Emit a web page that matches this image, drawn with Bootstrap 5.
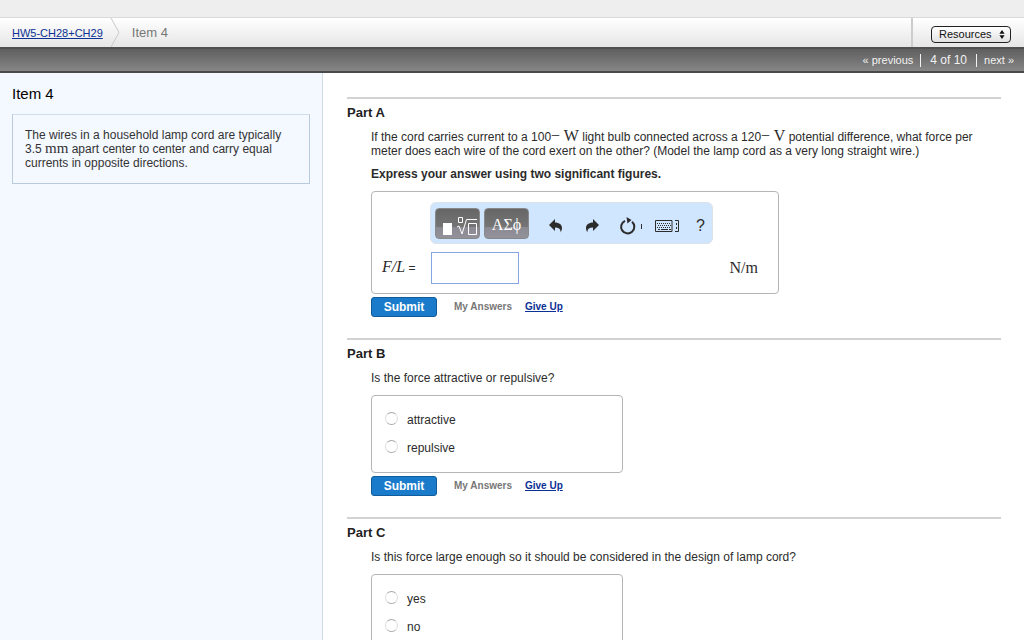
<!DOCTYPE html>
<html lang="en">
<head>
<meta charset="utf-8">
<meta name="viewport" content="width=device-width, initial-scale=1">
<title>HW5-CH28+CH29 - Item 4</title>
<link href="https://cdn.jsdelivr.net/npm/bootstrap@5.3.0/dist/css/bootstrap.min.css" rel="stylesheet">
<style>
  body { font-family: "Liberation Sans", Arial, sans-serif; font-size: 12px; line-height: 14px; color: #2b2b2b; }
  a { color: #0b3194; }
  .top-strip { height: 18px; background: #eee; border-bottom: 1px solid #d9d9d9; }
  .crumb-bar { height: 29px; background: linear-gradient(#fff, #e6e6e6); }
  .crumb-bar .crumb-link { font-size: 11px; padding-left: 12px; }
  .crumb-sep { width: 10px; height: 29px; margin: 0 12px 0 7px; }
  .crumb-now { font-size: 13px; color: #777; }
  .resources-cell { border-left: 2px solid #ccc; padding: 4px 13px 0 18px; }
  .resources-pick { appearance: none; width: 80px; height: 17px; font-size: 11px; line-height: 13px; padding: 0 7px; border: 1px solid #222; border-radius: 4px; background: linear-gradient(#fff, #e2e2e2); color: #111; }
  .pick-arrows { right: 6px; top: 4px; pointer-events: none; }
  .pager-bar { height: 26px; padding-right: 10px; font-size: 11px; color: #f2f2f2; background: linear-gradient(#5f5f5f, #868686); border-top: 2px solid #505050; border-bottom: 2px solid #4a4a4a; }
  .pager-bar a { color: #f2f2f2; text-decoration: none; }
  .pager-count { font-size: 12px; line-height: 13px; border: solid #f2f2f2; border-width: 0 1px; padding: 0 9px; margin: 0 7px 0 7px; }
  .side-pane { width: 323px; min-height: calc(100vh - 73px); padding: 12px; background: #f4f8ff; border-right: 1px solid #cfdde9; }
  .side-pane h1 { font-size: 15px; line-height: 18px; margin-bottom: 11px; color: #000; font-weight: 400; }
  .stem-box { border: 1px solid #b9cbdc; border-top-color: #d0dfea; padding: 13px 12px; color: #333; }
  .math { font-family: "Liberation Serif", "Times New Roman", serif; font-size: 16px; line-height: 12px; }
  .stem-box .math { font-size: 15px; }
  .main-pane { padding: 24px 23px 0 24px; min-width: 0; }
  .part { border-top: 2px solid #d2d2d2; padding-bottom: 21px; }
  .part h2 { font-size: 13px; line-height: 16px; font-weight: 700; margin: 6px 0 9px; color: #222; }
  .part-body { padding-left: 24px; }
  .directive { margin: 9px 0 0; font-weight: 700; }
  .answer-box { border: 1px solid #b5b5b5; border-radius: 4px; margin: 10px 0 3px; max-width: 408px; }
  .value-box { padding-bottom: 9px; }
  .choice-box { max-width: 252px; height: 78px; padding: 16px 13px 0; }
  .choice { height: 28px; }
  .choice input { appearance: none; width: 13px; height: 13px; margin: 0 9px 4px 0; border: 1px solid #aaa; border-right-color: #ddd; border-left-color: #ddd; border-radius: 50%; background: #fff; }
  .choice input:checked { background: #1a7bca; }
  .tool-bar { width: 283px; height: 42px; padding: 0 4px; margin: 10px 0 8px 58px; background: #d0e5fe; border: 1px solid #dbe2ea; border-radius: 6px; }
  .pad-btn { width: 45px; height: 31px; padding: 0; border: 1px solid #898989; border-radius: 4px; background: linear-gradient(#666 0, #757575 62%, #8b8991 63%, #93919a 100%); }
  .greek-btn { padding-top: 4px; }
  .tool-btn { border: 0; padding: 0; margin: 6px 0 0; background: none; }
  .redo-btn { margin-left: 22px; }
  .reset-btn { margin-left: 20px; }
  .keys-btn { margin-left: 12px; }
  .help-btn { margin: 6px 3px 0 15px; font-size: 16px; line-height: 16px; color: #2c2c2c; }
  .qty-label { width: 51px; padding-left: 2px; }
  .qty-input { width: 88px; height: 32px; border: 1px solid #86a5e3; padding: 4px; outline: 0; }
  .submit-btn { width: 66px; height: 20px; padding: 0; font-size: 12px; line-height: 16px; font-weight: 700; color: #fff; background: #1a7bca; border: 1px solid #105c9c; border-radius: 3px; }
  .actions { font-size: 10px; font-weight: 700; }
  .actions .mine { color: #777; margin: 0 13px 0 17px; }
</style>
</head>
<body>
<div class="top-strip"></div>
<nav class="crumb-bar d-flex align-items-center" aria-label="Breadcrumb">
  <a class="crumb-link" href="#">HW5-CH28+CH29</a>
  <svg class="crumb-sep" viewBox="0 0 10 29" fill="none" aria-hidden="true"><path d="M1 0 9 14.5 1 29" stroke="#c9c9c9"/></svg>
  <span class="crumb-now">Item 4</span>
  <div class="resources-cell ms-auto h-100 d-flex align-items-center">
    <div class="position-relative d-flex">
      <select class="resources-pick" aria-label="Resources"><option>Resources</option></select>
      <svg class="pick-arrows position-absolute" width="6" height="9" viewBox="0 0 6 9" aria-hidden="true"><path d="M3 0 5.6 3.8H.4zM3 9 5.6 5.2H.4z" fill="#111"/></svg>
    </div>
  </div>
</nav>
<nav class="pager-bar d-flex justify-content-end align-items-center" aria-label="Items">
  <a href="#">« previous</a><span class="pager-count">4 of 10</span><a href="#">next »</a>
</nav>
<div class="d-flex align-items-stretch">
  <aside class="side-pane flex-shrink-0">
    <h1>Item 4</h1>
    <div class="stem-box">The wires in a household lamp cord are typically 3.5 <span class="math">mm</span> apart center to center and carry equal currents in opposite directions.</div>
  </aside>
  <main class="main-pane flex-grow-1">
    <section class="part">
      <h2>Part A</h2>
      <div class="part-body">
        <p class="mb-0">If the cord carries current to a 100<span class="math">− W</span> light bulb connected across a 120<span class="math">− V</span> potential difference, what force per meter does each wire of the cord exert on the other? (Model the lamp cord as a very long straight wire.)</p>
        <p class="directive">Express your answer using two significant figures.</p>
        <div class="answer-box value-box">
          <div class="tool-bar d-flex align-items-center">
            <button type="button" class="pad-btn" aria-label="Templates">
              <svg class="d-block" width="43" height="29" viewBox="0 0 43 29" fill="none" stroke="#fff"><path d="M7 14h9v12H7z" fill="#fff" stroke="none"/><path d="M22.5 8.5h4v5h-4zM21 18l2-1 3 8L30.500 10.500H41M32.500 14.500h8v11h-8z"/></svg>
            </button>
            <button type="button" class="pad-btn greek-btn math text-white ms-1">ΑΣϕ</button>
            <button type="button" class="tool-btn ms-auto" aria-label="Undo"><svg class="d-block" width="14" height="14" viewBox="0 0 14 14" fill="#2c2c2c"><path d="M0 6 6 0v3.500c6 0 9 4.500 5.500 10C12 10 10 8.500 6 8.500V12z"/></svg></button>
            <button type="button" class="tool-btn redo-btn" aria-label="Redo"><svg class="d-block" width="14" height="14" viewBox="0 0 14 14" fill="#2c2c2c"><path d="M14 6 8 0v3.500c-6 0-9 4.500-5.500 10C2 10 4 8.500 8 8.500V12z"/></svg></button>
            <button type="button" class="tool-btn reset-btn" aria-label="Reset"><svg class="d-block" width="24" height="18" viewBox="0 0 24 18" fill="none" stroke="#2c2c2c"><path d="M6 3.800A6.600 6.600 0 1 0 13 4.800" stroke-width="2"/><path d="m7.500 0 5 3-4 3.500z" fill="#2c2c2c" stroke="none"/><path d="M22.500 7v5"/></svg></button>
            <button type="button" class="tool-btn keys-btn" aria-label="Keyboard"><svg class="d-block" width="26" height="12" viewBox="0 0 26 12" fill="none" stroke="#2c2c2c"><path d="M17 .5H.5v11H17z"/><path d="M2 3.500h14M3 5.500h13M2 7.500h14" stroke-dasharray="1 1"/><path d="M3 9.500h2m1 0h7m1 0h2M20 .5h3.500v11H20M21.500 3v2m0 2v2"/></svg></button>
            <button type="button" class="tool-btn help-btn" aria-label="Help">?</button>
          </div>
          <div class="d-flex align-items-center">
            <label class="qty-label ms-2" for="force"><i class="math">F/L</i> =</label>
            <input class="qty-input" id="force" type="text">
            <span class="math ms-auto me-3 pe-1">N/m</span>
          </div>
        </div>
        <div class="actions d-flex align-items-center"><button type="button" class="submit-btn">Submit</button><span class="mine">My Answers</span><a href="#">Give Up</a></div>
      </div>
    </section>
    <section class="part">
      <h2>Part B</h2>
      <div class="part-body">
        <p class="mb-0">Is the force attractive or repulsive?</p>
        <div class="answer-box choice-box">
          <div class="choice"><input type="radio" name="b" id="b1" class="align-middle"><label for="b1">attractive</label></div>
          <div class="choice"><input type="radio" name="b" id="b2" class="align-middle"><label for="b2">repulsive</label></div>
        </div>
        <div class="actions d-flex align-items-center"><button type="button" class="submit-btn">Submit</button><span class="mine">My Answers</span><a href="#">Give Up</a></div>
      </div>
    </section>
    <section class="part pb-0">
      <h2>Part C</h2>
      <div class="part-body">
        <p class="mb-0">Is this force large enough so it should be considered in the design of lamp cord?</p>
        <div class="answer-box choice-box">
          <div class="choice"><input type="radio" name="c" id="c1" class="align-middle"><label for="c1">yes</label></div>
          <div class="choice"><input type="radio" name="c" id="c2" class="align-middle"><label for="c2">no</label></div>
        </div>
      </div>
    </section>
  </main>
</div>
<script src="https://cdn.jsdelivr.net/npm/bootstrap@5.3.0/dist/js/bootstrap.bundle.min.js"></script>
</body>
</html>
